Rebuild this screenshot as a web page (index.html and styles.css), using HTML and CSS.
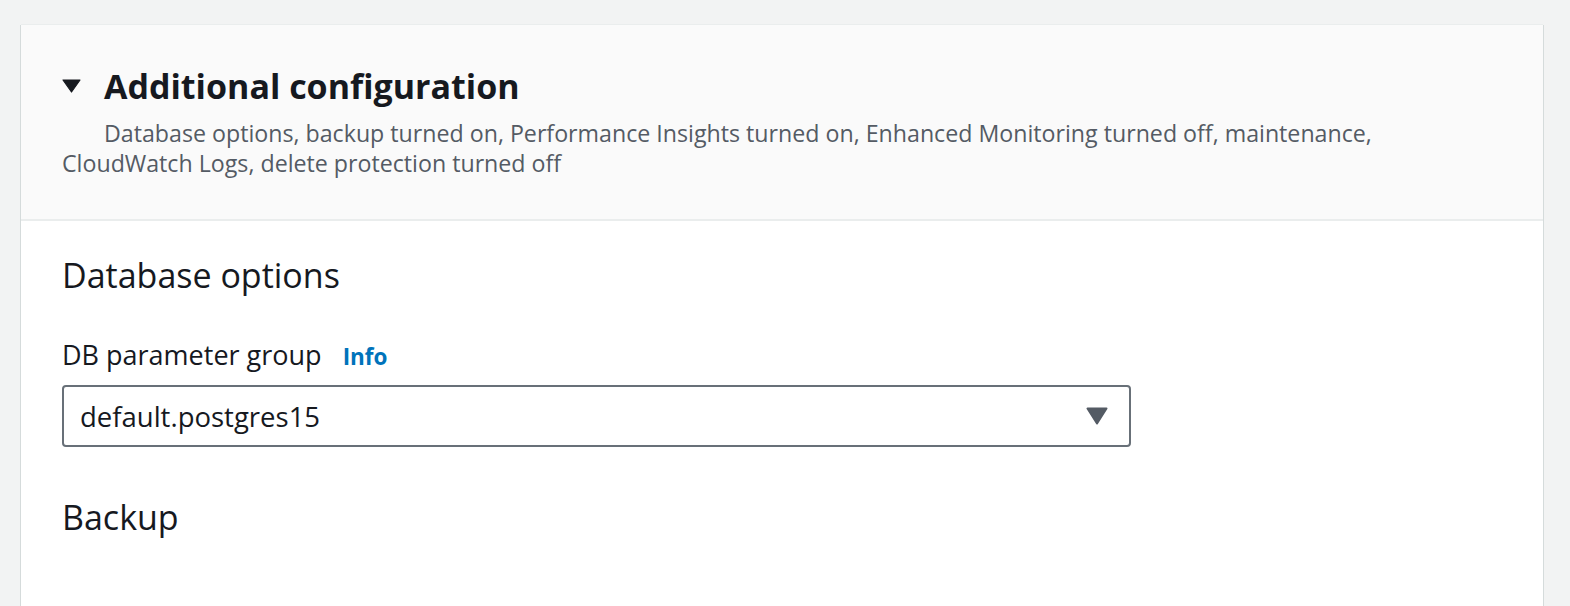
FILE: index.html
```html
<!DOCTYPE html>
<html>
<head>
<meta charset="utf-8">
<link rel="stylesheet" href="styles.css">
</head>
<body>
<div class="page">
  <section class="card">
    <header class="card-header">
      <div class="title-row">
        <svg class="caret" width="19" height="14" viewBox="0 0 19 14"><path d="M1 1H18L9.5 13Z" fill="#16191f" stroke="#16191f" stroke-width="1.2" stroke-linejoin="round"/></svg>
        <h2 class="title">Additional configuration</h2>
      </div>
      <p class="desc">Database options, backup turned on, Performance Insights turned on, Enhanced Monitoring turned off, maintenance, CloudWatch Logs, delete protection turned off</p>
    </header>
    <div class="card-body">
      <h3 class="section-title">Database options</h3>
      <div class="field">
        <div class="label-row"><span class="label">DB parameter group</span><a class="info">Info</a></div>
        <div class="select">
          <span class="select-value">default.postgres15</span>
          <svg class="select-caret" width="22" height="18" viewBox="0 0 22 18"><path d="M1.5 1.5H20.5L11 16.5Z" fill="#545b64" stroke="#545b64" stroke-width="2" stroke-linejoin="round"/></svg>
        </div>
      </div>
      <h3 class="section-title backup">Backup</h3>
    </div>
  </section>
</div>
</body>
</html>
```
FILE: styles.css
```css
html, body {
  margin: 0;
  padding: 0;
  background: #f2f3f3;
  font-family: "Open Sans", "Noto Sans", sans-serif;
  color: #16191f;
}
.page {
  padding: 25px 27px 0 21px;
  height: 606px;
  box-sizing: border-box;
  overflow: hidden;
}
.card {
  background: #fff;
  box-shadow: -1px 0 0 #d5dbdb, 1px 0 0 #d5dbdb, 0 -1px 0 #eaeded;
  min-height: 600px;
}
.card-header {
  background: #fafafa;
  border-bottom: 2px solid #eaeded;
  padding: 41px 100px 41px 41px;
}
.title-row {
  display: flex;
  align-items: center;
  gap: 23px;
}
.caret {
  flex: none;
}
.title {
  margin: 0;
  font-size: 34px;
  font-weight: 700;
  line-height: 40px;
}
.desc {
  margin: 12px 0 0;
  text-indent: 42px;
  font-size: 23.2px;
  line-height: 30px;
  color: #545b64;
}
.card-body {
  padding: 34px 41px 0 41px;
}
.section-title {
  margin: 0;
  font-size: 34px;
  font-weight: 400;
  line-height: 40px;
}
.field {
  margin-top: 45px;
}
.label-row {
  display: flex;
  align-items: baseline;
  gap: 21px;
  height: 30px;
}
.label {
  font-size: 27px;
  line-height: 30px;
}
.info {
  font-size: 22.5px;
  font-weight: 700;
  color: #0073bb;
}
.select {
  margin-top: 15px;
  width: 1069px;
  height: 62px;
  box-sizing: border-box;
  border: 2px solid #687078;
  border-radius: 4px;
  display: flex;
  align-items: center;
  justify-content: space-between;
  padding: 0 21px 0 16px;
}
.select-value {
  font-size: 27.5px;
}
.backup {
  margin-top: 50px;
}
```
